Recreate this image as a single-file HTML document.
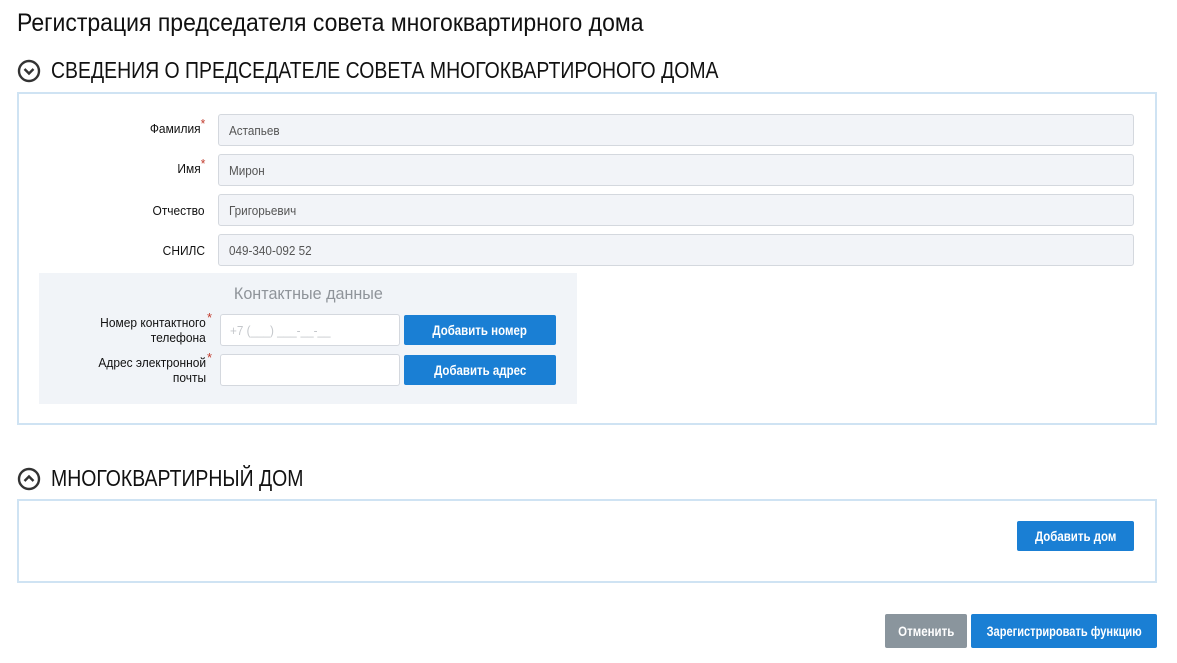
<!DOCTYPE html>
<html><head><meta charset="utf-8"><style>
*{box-sizing:border-box;margin:0;padding:0}
body{width:1177px;height:663px;background:#fff;font-family:"Liberation Sans",sans-serif;color:#111;position:relative;overflow:hidden}
.a{position:absolute}
.c{display:inline-block;white-space:nowrap}
h1{position:absolute;left:17px;top:9px;font-size:25px;font-weight:normal;white-space:nowrap}
h1 .c{transform:scaleX(.92);transform-origin:left}
.sh{position:absolute;left:17px;font-size:23px;white-space:nowrap;display:flex;align-items:center}
.sh svg{margin-right:10px;flex:none}
.sh .c{transform:scaleX(.845);transform-origin:left}
.box{position:absolute;left:17px;width:1140px;border:2px solid #cfe3f3}
.lbl{position:absolute;right:972px;font-size:13px;text-align:right;line-height:15px}
.lbl .c{transform:scaleX(.92);transform-origin:right;text-align:right}
.st{color:#c0392b;position:relative;top:-5px}
.inp{position:absolute;left:218px;width:916px;height:32px;background:#f2f4f8;border:1px solid #d4d8de;border-radius:3px;font-size:13px;color:#555;padding:8px 10px}
.inp .c{transform:scaleX(.9);transform-origin:left}
.btn{position:absolute;background:#1a7fd4;color:#fff;font-size:14px;font-weight:bold;border-radius:2px;white-space:nowrap;display:flex;justify-content:center;align-items:center;overflow:visible}
.btn .c{transform:scaleX(.82);transform-origin:center;flex:none}
</style></head><body>
<h1><span class="c">Регистрация председателя совета многоквартирного дома</span></h1>
<div class="sh" style="top:57px"><svg width="24" height="24" viewBox="0 0 24 24"><circle cx="12" cy="12" r="10" fill="none" stroke="#333" stroke-width="2.4"/><path d="M7.5 10l4.5 4.5 4.5-4.5" fill="none" stroke="#333" stroke-width="2.4"/></svg><span class="c">СВЕДЕНИЯ О ПРЕДСЕДАТЕЛЕ СОВЕТА МНОГОКВАРТИРОНОГО ДОМА</span></div>
<div class="box" style="top:92px;height:333px"></div>
<div class="lbl" style="top:121px"><span class="c">Фамилия<span class="st">*</span></span></div>
<div class="inp" style="top:114px"><span class="c">Астапьев</span></div>
<div class="lbl" style="top:161px"><span class="c">Имя<span class="st">*</span></span></div>
<div class="inp" style="top:154px"><span class="c">Мирон</span></div>
<div class="lbl" style="top:203px"><span class="c">Отчество</span></div>
<div class="inp" style="top:194px"><span class="c">Григорьевич</span></div>
<div class="lbl" style="top:243px"><span class="c">СНИЛС</span></div>
<div class="inp" style="top:234px"><span class="c">049-340-092 52</span></div>
<div class="a" style="left:39px;top:273px;width:538px;height:131px;background:#f1f4f8"></div>
<div class="a" style="left:39px;top:284px;width:538px;text-align:center;font-size:17px;color:#8f949a"><span class="c" style="transform:scaleX(.95)">Контактные данные</span></div>
<div class="lbl" style="top:315px;right:971px"><span class="c">Номер контактного<br>телефона</span></div><div class="a st" style="left:207px;top:310px;font-size:13px;position:absolute">*</div>
<div class="a" style="left:220px;top:314px;width:180px;height:32px;background:#fff;border:1px solid #d4d8de;border-radius:3px;font-size:13px;color:#c4c7cb;padding:8px 9px"><span class="c" style="transform:scaleX(.9);transform-origin:left">+7 (___) ___-__-__</span></div>
<div class="btn" style="left:404px;top:315px;width:152px;height:30px"><span class="c">Добавить номер</span></div>
<div class="lbl" style="top:355px;right:971px"><span class="c">Адрес электронной<br>почты</span></div><div class="a st" style="left:207px;top:350px;font-size:13px;position:absolute">*</div>
<div class="a" style="left:220px;top:354px;width:180px;height:32px;background:#fff;border:1px solid #d4d8de;border-radius:3px"></div>
<div class="btn" style="left:404px;top:355px;width:152px;height:30px"><span class="c">Добавить адрес</span></div>
<div class="sh" style="top:465px"><svg width="24" height="24" viewBox="0 0 24 24"><circle cx="12" cy="12" r="10" fill="none" stroke="#333" stroke-width="2.4"/><path d="M7.5 14l4.5-4.5 4.5 4.5" fill="none" stroke="#333" stroke-width="2.4"/></svg><span class="c">МНОГОКВАРТИРНЫЙ ДОМ</span></div>
<div class="box" style="top:499px;height:84px"></div>
<div class="btn" style="left:1017px;top:521px;width:117px;height:30px"><span class="c">Добавить дом</span></div>
<div class="btn" style="left:885px;top:614px;width:82px;height:34px;background:#8a959d"><span class="c">Отменить</span></div>
<div class="btn" style="left:971px;top:614px;width:186px;height:34px"><span class="c" style="transform:scaleX(.79)">Зарегистрировать функцию</span></div>
</body></html>
